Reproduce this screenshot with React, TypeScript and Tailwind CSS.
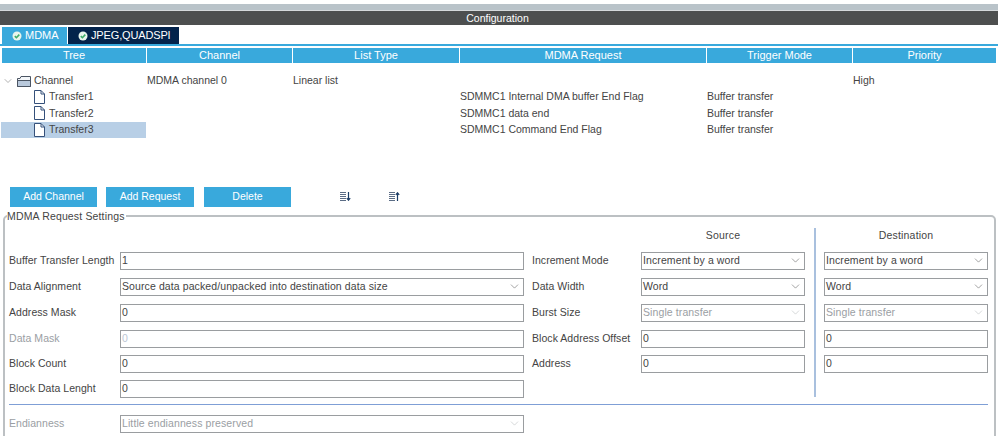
import { ChevronDown } from 'lucide-react';

const font = "font-['Liberation_Sans',Arial,sans-serif]";

const columns = ['Tree', 'Channel', 'List Type', 'MDMA Request', 'Trigger Mode', 'Priority'];
const gridCols = 'grid grid-cols-[144px_145px_166px_246px_145px_143px] gap-x-px';
const rightCols = 'grid grid-cols-[109px_164px_19px_164px]';

const transfers = [
  { name: 'Transfer1', request: 'SDMMC1 Internal DMA buffer End Flag' },
  { name: 'Transfer2', request: 'SDMMC1 data end' },
  { name: 'Transfer3', request: 'SDMMC1 Command End Flag', selected: true },
];

function CheckBadge() {
  return (
    <svg width="10" height="10" viewBox="0 0 10 10" className="shrink-0">
      <circle cx="5" cy="5" r="4.5" fill="#e8f5ec" />
      <path d="M2.8 5.1 4.4 6.7 7.3 3.6" fill="none" stroke="#3fae6a" strokeWidth="1.6" />
    </svg>
  );
}

function FolderIcon() {
  return (
    <svg width="16" height="12" viewBox="0 0 16 12" className="shrink-0">
      <path d="M1.5 11.5V3.5H4L5 1.5H14.5V11.5Z" fill="#f4f7fa" stroke="#4b5563" />
      <path d="M1.5 5.5H14.5V11.5H1.5Z" fill="#b9c9dc" stroke="#4b5563" />
    </svg>
  );
}

function FileIcon() {
  return (
    <svg width="11" height="14" viewBox="0 0 11 14" className="shrink-0">
      <path d="M.5.5H7L10.5 4V13.5H.5Z" fill="#fff" stroke="#35507a" />
      <path d="M7 .5V4H10.5" fill="none" stroke="#35507a" />
    </svg>
  );
}

function SortIcon({ up }: { up?: boolean }) {
  return (
    <svg width="11" height="9" viewBox="0 0 11 9" className="shrink-0">
      <path d="M0 .5H6M0 2.5H6M0 4.5H6M0 6.5H6M0 8.5H6" stroke="#5b6c85" strokeWidth="1" />
      {up ? (
        <path d="M8.5 9V1M6.8 2.8 8.5 .8 10.2 2.8" fill="none" stroke="#1c3d66" strokeWidth="1.2" />
      ) : (
        <path d="M8.5 0V8M6.8 6.2 8.5 8.2 10.2 6.2" fill="none" stroke="#1c3d66" strokeWidth="1.2" />
      )}
    </svg>
  );
}

function Field({ value, select, disabled, pale }: { value: string; select?: boolean; disabled?: boolean; pale?: boolean }) {
  const tone = pale ? 'text-[#bcc6d4]' : disabled ? 'text-[#9a9ea3]' : 'text-[#444]';
  return (
    <div className={`flex items-center justify-between h-full border border-[#9a9da0] bg-white pl-[1px] pr-[2px] text-[10.5px] tracking-[0.1px] ${tone}`}>
      <span>{value}</span>
      {select && <ChevronDown size={13} strokeWidth={1} className={disabled ? 'text-[#b5b8ba]' : 'text-[#555]'} />}
    </div>
  );
}

function Label({ children, disabled }: { children: string; disabled?: boolean }) {
  return <span className={`text-[10.5px] tracking-[0.05px] whitespace-nowrap ${disabled ? 'text-[#9a9ea3]' : 'text-[#444]'}`}>{children}</span>;
}

export default function App() {
  return (
    <div className={`${font} w-[998px] h-[436px] overflow-hidden bg-white pt-1`}>
      <div className="h-[6px] bg-[#b9c3c9]" />
      <div className="h-px bg-[#d5d9db]" />
      <div className="h-[14px] pr-[3px] bg-[#4d4f4f] text-white text-[10.5px] leading-[14px] text-center">Configuration</div>

      {/* tabs */}
      <div className="flex mt-[2px] pl-[2px] h-[17px] text-[11px]">
        <div className="w-[65px] bg-[#39a9dc] text-white flex items-center pl-[10px] gap-[3px]">
          <CheckBadge />
          <span>MDMA</span>
        </div>
        <div className="w-[111px] ml-px bg-[#03234b] text-white flex items-center pl-[10px] gap-[3px]">
          <CheckBadge />
          <span className="tracking-[-0.15px]">JPEG,QUADSPI</span>
        </div>
      </div>
      <div className="h-[2px] bg-[#39a9dc]" />

      {/* table */}
      <div className={`${gridCols} mt-[2px] pl-[2px]`}>
        {columns.map((c) => (
          <div key={c} className="h-[15px] bg-[#39a9dc] text-white text-[11px] leading-[15px] text-center">{c}</div>
        ))}
      </div>
      <div className="mt-[10px] pl-[2px] text-[10.5px] text-[#444]">
        <div className={`${gridCols} h-[16px] items-center`}>
          <div className="flex items-center gap-[2px]">
            <ChevronDown size={12} strokeWidth={1} className="text-[#666]" />
            <FolderIcon />
            <span>Channel</span>
          </div>
          <div>MDMA channel 0</div>
          <div>Linear list</div>
          <div />
          <div />
          <div>High</div>
        </div>
        {transfers.map((t) => (
          <div key={t.name} className={`${gridCols} h-[16.33px] items-center`}>
            <div className={`flex items-center h-[16.33px] gap-[4px] pl-[33px] -ml-px ${t.selected ? 'bg-[#b8cfe6]' : ''}`}>
              <FileIcon />
              <span>{t.name}</span>
            </div>
            <div />
            <div />
            <div>{t.request}</div>
            <div>Buffer transfer</div>
            <div />
          </div>
        ))}
      </div>

      {/* actions */}
      <div className="flex items-center mt-[49px] pl-[10px] h-[20px] text-[10.5px] text-white">
        <div className="w-[87px] h-full bg-[#39a9dc] flex items-center justify-center">Add Channel</div>
        <div className="w-[88px] h-full bg-[#39a9dc] flex items-center justify-center ml-[9px]">Add Request</div>
        <div className="w-[87px] h-full bg-[#39a9dc] flex items-center justify-center ml-[10px]">Delete</div>
        <div className="ml-[49px]"><SortIcon /></div>
        <div className="ml-[38px]"><SortIcon up /></div>
      </div>

      {/* settings */}
      <fieldset className="mt-[3px] mx-[3px] h-[240px] border-2 border-[#bcc0c3] rounded-[5px] pl-[4px] pr-[6px]">
        <legend className="-ml-[2px] pr-[1px] text-[10.5px] leading-[12px] tracking-[0.15px] text-[#444]">MDMA Request Settings</legend>
        <div className="grid grid-cols-[523px_1fr] mt-[2px]">
          <div>
            <div className="h-[24px]" />
            {[
              { label: 'Buffer Transfer Length', value: '1', row: 'h-[26px]' },
              { label: 'Data Alignment', value: 'Source data packed/unpacked into destination data size', select: true, row: 'h-[26px]' },
              { label: 'Address Mask', value: '0', row: 'h-[26px]' },
              { label: 'Data Mask', value: '0', disabled: true, row: 'h-[26px]' },
              { label: 'Block Count', value: '0', row: 'h-[24px]' },
              { label: 'Block Data Lenght', value: '0', row: 'h-[26px]' },
            ].map((r) => (
              <div key={r.label} className={`grid grid-cols-[111px_404px] items-center ${r.row}`}>
                <Label disabled={r.disabled}>{r.label}</Label>
                <div className="h-[18px]">
                  <Field value={r.value} select={r.select} disabled={r.disabled} pale={r.disabled} />
                </div>
              </div>
            ))}
          </div>
          <div>
            <div className={`${rightCols} h-[24px] items-center text-[10.5px] text-[#444] tracking-[0.2px]`}>
              <div />
              <div className="text-center">Source</div>
              <div className="h-[20px] w-[2px] self-end justify-self-center bg-[#a9c0de]" />
              <div className="text-center">Destination</div>
            </div>
            {[
              { label: 'Increment Mode', value: 'Increment by a word', select: true, row: 'h-[26px]' },
              { label: 'Data Width', value: 'Word', select: true, row: 'h-[26px]' },
              { label: 'Burst Size', value: 'Single transfer', select: true, disabled: true, row: 'h-[26px]' },
              { label: 'Block Address Offset', value: '0', row: 'h-[26px]' },
              { label: 'Address', value: '0', row: 'h-[24px]' },
            ].map((r) => (
              <div key={r.label} className={`${rightCols} items-center ${r.row}`}>
                <Label>{r.label}</Label>
                <div className="h-[18px]"><Field value={r.value} select={r.select} disabled={r.disabled} /></div>
                <div className="h-full w-[2px] justify-self-center bg-[#a9c0de]" />
                <div className="h-[18px]"><Field value={r.value} select={r.select} disabled={r.disabled} /></div>
              </div>
            ))}
            <div className={`${rightCols} h-[21px]`}>
              <div />
              <div />
              <div className="h-full w-[2px] justify-self-center bg-[#a9c0de]" />
            </div>
          </div>
        </div>
        <div className="h-px bg-[#7f9fd6] mt-[2px]" />
        <div className="grid grid-cols-[111px_404px] items-center mt-[10px]">
          <Label disabled>Endianness</Label>
          <div className="h-[18px]"><Field value="Little endianness preserved" select disabled /></div>
        </div>
      </fieldset>
    </div>
  );
}
